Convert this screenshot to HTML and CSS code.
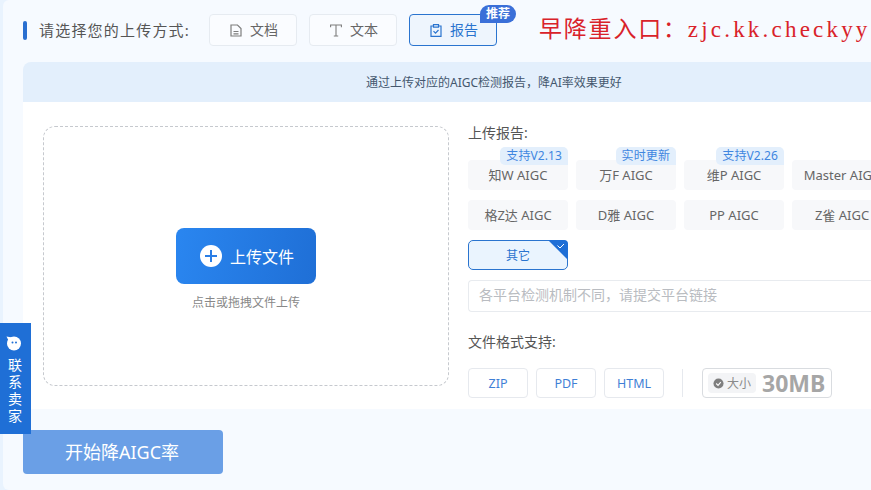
FILE: index.html
```html
<!DOCTYPE html>
<html lang="zh-CN">
<head>
<meta charset="utf-8">
<title>上传</title>
<link rel="stylesheet" href="styles.css">
</head>
<body>
<div class="page">
  <header class="mode-row">
    <span class="mark"></span>
    <span class="mode-title">请选择您的上传方式:</span>
    <div class="tabs">
      <button class="tab">
        <svg class="ti" viewBox="0 0 12 13" fill="none" stroke="#7d7d7d" stroke-width="1.200"><path d="M1 1h6.500L11 4.500V12H1z"/><path d="M3.500 7.500h5M3.500 9.800h5"/></svg>文档
      </button>
      <button class="tab">
        <svg class="ti" viewBox="0 0 12 13" fill="none" stroke="#7d7d7d" stroke-width="1.100"><path d="M.6 3.200V1h10.800v2.200M6 1v11M3.800 12h4.400"/></svg>文本
      </button>
      <button class="tab tab-on">
        <svg class="ti" viewBox="0 0 12 13" fill="none" stroke="#2a74cf" stroke-width="1.200"><path d="M3.500 2H1v10.400h10V2H8.500"/><path d="M3.500.7h5v2.500h-5z"/><path d="M3.500 7.200l2 2L8.500 6"/></svg>报告
        <span class="rec">推荐</span>
      </button>
    </div>
    <span class="notice">早降重入口：<span class="notice-url">zjc.kk.checkyy</span></span>
  </header>

  <div class="tip">通过上传对应的AIGC检测报告，降AI率效果更好</div>

  <main class="panel">
    <section class="drop">
      <button class="upload">
        <svg class="plus" viewBox="0 0 22 22"><circle cx="11" cy="11" r="11" fill="#fff"/><path d="M11 5v12M5 11h12" stroke="#2a7ee6" stroke-width="2"/></svg>上传文件
      </button>
      <p class="hint">点击或拖拽文件上传</p>
    </section>
    <section class="side">
      <h3 class="label">上传报告:</h3>
      <div class="grid">
        <div class="opt">知W AIGC<span class="flag">支持V2.13</span></div>
        <div class="opt">万F AIGC<span class="flag">实时更新</span></div>
        <div class="opt">维P AIGC<span class="flag">支持V2.26</span></div>
        <div class="opt">Master AIGC</div>
        <div class="opt">格Z达 AIGC</div>
        <div class="opt">D雅 AIGC</div>
        <div class="opt">PP AIGC</div>
        <div class="opt">Z雀 AIGC</div>
        <div class="opt opt-on">其它<svg class="corner" viewBox="0 0 20 20"><path d="M0 0h16a4 4 0 0 1 4 4v16z" fill="#1f6fd6"/><path d="M9.500 5.500l2.500 2.500 4-4" fill="none" stroke="#fff" stroke-width="1"/></svg></div>
      </div>
      <div class="link">各平台检测机制不同，请提交平台链接</div>
      <h3 class="label label-f">文件格式支持:</h3>
      <div class="formats">
        <span class="fmt">ZIP</span>
        <span class="fmt">PDF</span>
        <span class="fmt">HTML</span>
        <span class="sep"></span>
        <span class="size"><span class="size-k"><svg class="ok" viewBox="0 0 12 12"><circle cx="6" cy="6" r="5.500" fill="#7f7f7f"/><path d="M3.500 6l2 2 3-3.500" fill="none" stroke="#fff" stroke-width="1.200"/></svg>大小</span><b>30MB</b></span>
      </div>
    </section>
  </main>

  <button class="start">开始降AIGC率</button>
</div>
<aside class="contact">
  <svg class="face" viewBox="0 0 16 16"><circle cx="8" cy="8.500" r="7" fill="#fff"/><path d="M0.500 1.500L6 2.500 2.500 5.500z" fill="#fff"/><circle cx="6.500" cy="7.500" r="1" fill="#1f6fd6"/><circle cx="10" cy="7.500" r="1" fill="#1f6fd6"/></svg>
  <span class="contact-text">联系卖家</span>
</aside>
</body>
</html>
```

FILE: styles.css
```css
* { box-sizing: border-box; }
html, body { margin: 0; height: 100%; overflow: hidden; }
body {
  font-family: "Noto Sans", "Noto Sans CJK SC", sans-serif;
  background: #e9f3fe;
}
.page {
  width: 871px;
  height: 490px;
  margin-left: 3px;
  padding: 14px 0 0 20px;
  background: #f6faff;
  overflow: hidden;
  border-radius: 6px 0 0 6px;
}
.mode-row { display: flex; align-items: center; height: 32px; white-space: nowrap; }
.mark { width: 4px; height: 19px; background: #2a6fd0; border-radius: 2px; }
.mode-title { margin-left: 12px; font-size: 15px; color: #555; width: 170px; padding-bottom: 2px; letter-spacing: 1.200px; }
.tabs { display: flex; gap: 12px; }
.tab {
  position: relative;
  width: 88px;
  height: 32px;
  display: flex;
  align-items: center;
  justify-content: center;
  gap: 8px;
  background: #fafcff;
  border: 1px solid #e6ebf1;
  border-radius: 4px;
  font: inherit;
  font-size: 14px;
  color: #666;
  padding: 0 0 2px 2px;
}
.ti { width: 12px; height: 13px; margin-top: 2px; }
.tab-on { background: #eef5fd; border-color: #2a74cf; color: #2a74cf; }
.rec {
  position: absolute;
  right: -20px;
  top: -10px;
  width: 36px;
  height: 18px;
  line-height: 17px;
  text-align: center;
  font-size: 12px;
  font-weight: 700;
  color: #fff;
  background: #3a6fd8;
  border-radius: 9px 9px 9px 0;
}
.notice {
  margin-left: 42px;
  font-family: "Liberation Serif", "Noto Sans CJK SC", serif;
  font-size: 23px;
  letter-spacing: 1.800px;
  color: #d9222a;
  margin-top: -7px;
}
.notice-url { letter-spacing: 3.200px; }
.tip {
  width: 880px;
  height: 40px;
  margin-top: 16px;
  background: #e3effc;
  border-radius: 8px 8px 0 0;
  font-size: 12px;
  color: #44576e;
  line-height: 41px;
  padding-left: 343px;
}
.panel {
  width: 880px;
  height: 307px;
  background: #fff;
  display: flex;
  padding: 24px 0 0 20px;
}
.drop {
  width: 406px;
  height: 260px;
  border: 1px dashed #c6c9ce;
  border-radius: 12px;
  display: flex;
  flex-direction: column;
  align-items: center;
  padding-top: 101px;
}
.upload {
  width: 140px;
  height: 56px;
  display: flex;
  align-items: center;
  justify-content: center;
  gap: 8px;
  background: linear-gradient(100deg, #2a86f0, #1f6fd6);
  border: 0;
  border-radius: 8px;
  color: #fff;
  font: inherit;
  font-size: 16px;
  padding: 0 0 0 2px;
}
.plus { width: 22px; height: 22px; }
.hint { margin: 10px 0 0; font-size: 12px; line-height: 18px; color: #888; }
.side { margin-left: 19px; width: 420px; flex: none; }
.label { margin: 0; font-size: 14px; font-weight: 400; line-height: 14px; color: #555; }
.grid {
  display: grid;
  grid-template-columns: repeat(4, 100px);
  grid-auto-rows: 30px;
  gap: 10px 8px;
  margin-top: 20px;
  width: 440px;
}
.opt {
  position: relative;
  background: #f7f8fa;
  border-radius: 4px;
  font-size: 13px;
  color: #666;
  display: flex;
  align-items: center;
  justify-content: center;
  white-space: nowrap;
  padding-bottom: 1px;
}
.flag {
  position: absolute;
  right: 0;
  top: -13px;
  height: 18px;
  line-height: 17px;
  padding: 0 6px;
  background: #e3effc;
  color: #3f86e0;
  font-size: 12px;
  letter-spacing: .1px;
  border-radius: 5px 5px 0 5px;
}
.opt-on {
  background: #eaf4fe;
  border: 1px solid #2a74cf;
  color: #2a74cf;
  font-size: 12px;
  border-radius: 5px;
}
.corner { position: absolute; right: -1px; top: -1px; width: 20px; height: 20px; }
.link {
  width: 420px;
  height: 32px;
  margin-top: 10px;
  border: 1px solid #e8ebef;
  border-right: 0;
  border-radius: 4px 0 0 4px;
  font-size: 14px;
  line-height: 28px;
  color: #b9bcc1;
  padding-left: 10px;
}
.label-f { margin-top: 23px; }
.formats { display: flex; align-items: center; margin-top: 19px; height: 30px; }
.fmt {
  width: 60px;
  height: 30px;
  margin-right: 8px;
  border: 1px solid #e6e9ee;
  border-radius: 4px;
  text-align: center;
  line-height: 29px;
  font-size: 12.500px;
  color: #3f7fd6;
}
.sep { width: 1px; height: 28px; background: #e6e9ee; margin: 0 19px 0 10px; }
.size {
  width: 130px;
  height: 30px;
  display: flex;
  align-items: center;
  padding-left: 5px;
  border: 1px solid #d9dce0;
  border-radius: 4px;
  color: #a6a6a6;
}
.size-k {
  display: flex;
  align-items: center;
  gap: 3px;
  height: 20px;
  padding: 0 5px;
  background: #f3f4f6;
  border-radius: 4px;
  font-size: 12px;
  color: #8a8a8a;
}
.ok { width: 11px; height: 11px; }
.size b { font-size: 23px; line-height: 28px; margin-left: 6px; }
.start {
  display: block;
  width: 200px;
  height: 44px;
  margin-top: 21px;
  background: #6a9fe6;
  border: 0;
  border-radius: 4px;
  color: #fff;
  font: inherit;
  font-size: 18px;
  padding: 0 2px 3px 0;
}
.contact {
  position: absolute;
  left: 0;
  top: 323px;
  width: 31px;
  height: 111px;
  padding-top: 12px;
  background: #1f6fd6;
  color: #fff;
  font-size: 14px;
  display: flex;
  flex-direction: column;
  align-items: center;
}
.contact-text { writing-mode: vertical-rl; text-orientation: upright; letter-spacing: 3px; line-height: 16px; margin-left: -3px; }
.face { width: 16px; height: 16px; margin-bottom: 7px; margin-left: -3px; flex: none; }
```
